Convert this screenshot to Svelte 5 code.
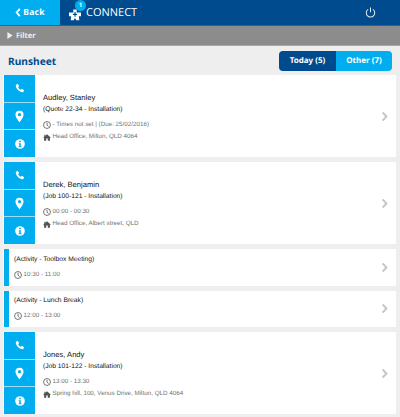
<script>
  const items = [
    { kind: "job", name: "Audley, Stanley", ref: "(Quote 22-34 - Installation)", time: "- Times not set | (Due: 25/02/2016)", place: "Head Office, Milton, QLD 4064" },
    { kind: "job", name: "Derek, Benjamin", ref: "(Job 100-121 - Installation)", time: "00:00 - 00:30", place: "Head Office, Albert street, QLD" },
    { kind: "activity", ref: "(Activity - Toolbox Meeting)", time: "10:30 - 11:00" },
    { kind: "activity", ref: "(Activity - Lunch Break)", time: "12:00 - 13:00" },
    { kind: "job", name: "Jones, Andy", ref: "(Job 101-122 - Installation)", time: "13:00 - 13:30", place: "Spring hill, 100, Venus Drive, Milton, QLD 4064" }
  ];
</script>

{#snippet clock()}
  <svg class="clock" viewBox="0 0 12 12" width="8" height="8">
    <circle cx="6" cy="6" r="5.2" fill="none" stroke="#555" stroke-width="1.2" />
    <path d="M6 2.8V6.2L8.4 8.2" fill="none" stroke="#555" stroke-width="1.2" />
  </svg>
{/snippet}

{#snippet chevron()}
  <svg class="chevron" viewBox="0 0 7 12" width="7" height="11">
    <path d="M1.5 1.5L5.5 6L1.5 10.5" fill="none" stroke="#c8c8c8" stroke-width="2.4" />
  </svg>
{/snippet}

<div class="page">
  <header>
    <div class="back">
      <svg viewBox="0 0 6 10" width="6" height="9"><path d="M5 1L1.5 5L5 9" fill="none" stroke="#fff" stroke-width="2" /></svg>
      <span>Back</span>
    </div>
    <div class="brand">
      <div class="logo">
        <svg viewBox="0 0 16 14" width="14" height="12">
          <path d="M6 0.5H10V4H15V8.5H12.5L13 13H9.5L8 10.5L6.5 13H3L3.5 8.5H1V4H6Z" fill="#fff" />
          <path d="M8 3.5V9M5.5 6.2H10.5" stroke="#004b8d" stroke-width="1.4" />
        </svg>
        <span class="badge">1</span>
      </div>
      <span class="connect">CONNECT</span>
    </div>
    <svg class="power" viewBox="0 0 12 12" width="11" height="11">
      <path d="M3.4 2.6A4.6 4.6 0 1 0 8.6 2.6M6 0.6V5.6" fill="none" stroke="#e4ecf4" stroke-width="1.1" />
    </svg>
  </header>

  <div class="filter">
    <svg viewBox="0 0 6 8" width="6" height="7"><path d="M0 0L6 4L0 8Z" fill="#eee" /></svg>
    <span>Filter</span>
  </div>

  <div class="title-row">
    <h1>Runsheet</h1>
    <div class="tabs">
      <span class="today">Today (5)</span>
      <span class="other">Other (7)</span>
    </div>
  </div>

  <div class="list">
    {#each items as item}
      {#if item.kind === "job"}
        <div class="card job">
          <div class="actions">
            <div class="action">
              <svg viewBox="0 0 12 12" width="10" height="10">
                <path d="M1 2.5L3 0.8L5 3.6L3.8 5C4.4 6.3 5.6 7.6 7 8.2L8.4 7L11.2 9L9.5 11C5.4 11.4 0.6 6.6 1 2.5Z" fill="#fff" />
              </svg>
            </div>
            <div class="action">
              <svg viewBox="0 0 10 14" width="9" height="13">
                <path fill-rule="evenodd" d="M5 0.5A4.5 4.5 0 0 1 9.5 5C9.5 8 6.5 11 5 13.5C3.5 11 0.5 8 0.5 5A4.5 4.5 0 0 1 5 0.5ZM5 3.2A1.8 1.8 0 1 0 5 6.8A1.8 1.8 0 1 0 5 3.2Z" fill="#fff" />
              </svg>
            </div>
            <div class="action">
              <svg viewBox="0 0 12 12" width="10" height="10">
                <circle cx="6" cy="6" r="5.8" fill="#fff" />
                <path d="M5 2.2H7V4H5ZM4.4 5H7V8.8H7.8V10H4.4V8.8H5.2V6.2H4.4Z" fill="#00aeef" />
              </svg>
            </div>
          </div>
          <div class="body">
            <div class="name">{item.name}</div>
            <div class="ref">{item.ref}</div>
            <div class="meta first">{@render clock()}<span>{item.time}</span></div>
            <div class="meta">
              <svg class="home" viewBox="0 0 12 10" width="8" height="7">
                <path d="M6 0L12 5.2H10.4V10H7.2V6.6H4.8V10H1.6V5.2H0L2 3.4V0.8H3.4V2.2Z" fill="#555" />
              </svg>
              <span>{item.place}</span>
            </div>
          </div>
          {@render chevron()}
        </div>
      {:else}
        <div class="card activity">
          <div class="strip"></div>
          <div class="body">
            <div class="ref">{item.ref}</div>
            <div class="meta first">{@render clock()}<span>{item.time}</span></div>
          </div>
          {@render chevron()}
        </div>
      {/if}
    {/each}
  </div>
</div>

<style>
  :global(body) {
    margin: 0;
    background: #eeeeee;
  }

  .page {
    width: 400px;
    height: 417px;
    overflow: hidden;
    background: #eeeeee;
    font-family: "Liberation Sans", Arial, sans-serif;
    text-rendering: geometricPrecision;
    opacity: 0.999;
  }

  header {
    height: 25px;
    display: flex;
    align-items: center;
    background: #004b8d;
    border-bottom: 1px solid #3f5f80;
  }

  .back {
    width: 60px;
    height: 100%;
    background: #00aeef;
    display: flex;
    align-items: center;
    justify-content: center;
    gap: 2px;
    color: #fff;
    font: bold 8.5px "Noto Sans", sans-serif;
    letter-spacing: 0.3px;
  }

  .brand {
    display: flex;
    align-items: center;
    margin-left: 8px;
  }

  .logo {
    position: relative;
    width: 17px;
    height: 13px;
    margin-top: 3px;
  }

  .badge {
    position: absolute;
    left: 7px;
    top: -8px;
    width: 11px;
    height: 11px;
    border-radius: 50%;
    background: #00aeef;
    color: #fff;
    font: bold 6px/11px "Noto Sans", sans-serif;
    text-align: center;
  }

  .connect {
    margin-left: 1px;
    color: #fff;
    font: 11px "Open Sans", sans-serif;
  }

  .power {
    margin-left: auto;
    margin-right: 24px;
  }

  .filter {
    height: 19px;
    display: flex;
    align-items: center;
    gap: 3px;
    padding-left: 7px;
    background: #8c8c8c;
    border-bottom: 1px solid #a8a8a8;
    color: #eee;
    font: bold 7.5px "Noto Sans", sans-serif;
  }

  .title-row {
    height: 29px;
    display: flex;
    align-items: center;
    justify-content: space-between;
    padding: 0 8px;
  }

  h1 {
    margin: 0;
    color: #004b8d;
    font: bold 10.2px "Noto Sans", sans-serif;
  }

  .tabs {
    display: flex;
    width: 113px;
    height: 20px;
    margin-top: 1px;
    border-radius: 4px;
    overflow: hidden;
    color: #fff;
    font: bold 8px/20px "Noto Sans", sans-serif;
    text-align: center;
  }

  .today {
    width: 57px;
    background: #004b8d;
  }

  .other {
    flex: 1;
    background: #00aeef;
  }

  .list {
    display: flex;
    flex-direction: column;
    gap: 5px;
    margin: 0 4px 0 3px;
  }

  .card {
    display: flex;
    align-items: stretch;
    background: #fff;
  }

  .job {
    height: 82px;
  }

  .activity {
    height: 36.5px;
  }

  .actions {
    width: 31px;
    display: flex;
    flex-direction: column;
    gap: 1px;
    background: #9fdcf5;
    margin-left: 1px;
  }

  .action {
    flex: 1;
    display: flex;
    align-items: center;
    justify-content: center;
    background: #00aeef;
  }

  .strip {
    width: 5px;
    margin-left: 1px;
    background: #00aeef;
  }

  .body {
    flex: 1;
    display: flex;
    flex-direction: column;
    justify-content: center;
    padding: 2px 0 0 8px;
    color: #111;
  }

  .name {
    font-size: 7.6px;
    line-height: 11px;
    margin-bottom: 2px;
  }

  .ref {
    font-size: 6.7px;
    line-height: 10px;
  }

  .meta {
    display: flex;
    align-items: center;
    gap: 1.5px;
    color: #707070;
    font-size: 6.25px;
    line-height: 10px;
    margin-top: 2px;
  }

  .meta.first {
    margin-top: 5px;
  }

  .activity .body {
    padding: 0 0 0 5px;
  }

  .chevron {
    align-self: center;
    margin-right: 8px;
  }
</style>
